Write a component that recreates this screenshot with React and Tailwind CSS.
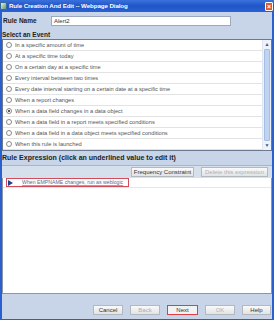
import React from 'react';

const events = [
  'In a specific amount of time',
  'At a specific time today',
  'On a certain day at a specific time',
  'Every interval between two times',
  'Every date interval starting on a certain date at a specific time',
  'When a report changes',
  'When a data field changes in a data object',
  'When a data field in a report meets specified conditions',
  'When a data field in a data object meets specified conditions',
  'When this rule is launched',
];

const Radio = ({ checked }) => (
  <span className="w-[6px] h-[6px] rounded-full border border-[#8a8a8a] bg-white flex items-center justify-center shrink-0">
    {checked && <span className="w-[2px] h-[2px] rounded-full bg-[#222]" />}
  </span>
);

const Btn = ({ children, w, disabled, active }) => (
  <div
    className={`h-[10px] flex items-center justify-center border text-[6px] leading-none ${w} ${
      active ? 'border-[#d9404a] bg-[#f2f2f2]' : 'border-[#b4b8bf] bg-gradient-to-b from-[#fafafa] to-[#e1e3e6]'
    } ${disabled ? 'text-[#b0b0b0]' : 'text-[#333]'}`}
  >
    {children}
  </div>
);

const App = () => {
  return (
    <div className="w-[274px] h-[320px] flex flex-col overflow-hidden bg-[#c8d5e8] font-['Liberation_Sans',Arial,sans-serif]">
      {/* title bar */}
      <div className="h-[12px] shrink-0 flex items-center bg-gradient-to-b from-[#3a72dc] via-[#1f54c6] to-[#2a62d4]">
        <div className="w-[7px] h-[8px] bg-gradient-to-br from-[#e8f0c0] to-[#5a9a8a] border border-[#3a6a9a]" />
        <span className="ml-[2px] text-white font-bold text-[6.2px] leading-none tracking-[-0.1px]">
          Rule Creation And Edit -- Webpage Dialog
        </span>
        <div className="ml-auto w-[8px] h-[9px] mr-[1px] rounded-[1px] bg-[#e0582c] border border-white flex items-center justify-center text-white font-bold text-[7px] leading-none">
          ×
        </div>
      </div>

      <div className="flex-1 flex flex-col border-l-[2px] border-r-[2px] border-b-[1px] border-[#2a5fcf] bg-[#c8d5e8]">
        {/* rule name */}
        <div className="h-[18px] shrink-0 flex items-center">
          <span className="w-[49px] pl-[1px] text-[6.5px] font-bold text-[#222]">Rule Name</span>
          <div className="w-[180px] h-[10px] bg-white border border-[#9aa9bd] flex items-center px-[2px] text-[6px] text-[#333]">
            Alert2
          </div>
        </div>

        <div className="h-[9px] shrink-0 flex items-end text-[6.5px] font-bold text-[#222] leading-none pb-[1px]">
          Select an Event
        </div>

        {/* event list */}
        <div className="h-[112px] shrink-0 flex bg-white border border-[#6b7a8f]">
          <div className="flex-1 flex flex-col">
            {events.map((e, i) => (
              <div
                key={i}
                className="h-[11px] shrink-0 flex items-center gap-[3px] pl-[3px] border-b border-[#e3e3e3] text-[5.7px] text-[#555] whitespace-nowrap"
              >
                <Radio checked={i === 6} />
                {e}
              </div>
            ))}
          </div>
          <div className="w-[9px] flex flex-col bg-[#eef3fb] border-l border-[#dfe6f1]">
            <div className="h-[9px] flex items-center justify-center text-[5px] text-[#3a5a8a]">▲</div>
            <div className="flex-1 mx-[1px] bg-[#c0d4f2] border border-[#a6bde3] rounded-[1px]" />
            <div className="h-[9px] flex items-center justify-center text-[5px] text-[#3a5a8a]">▼</div>
          </div>
        </div>

        {/* rule expression header */}
        <div className="h-[15px] shrink-0 flex items-center text-[7px] font-bold text-[#222] border-b border-[#a9b6c9]">
          Rule Expression (click an underlined value to edit it)
        </div>

        <div className="h-[12px] shrink-0 flex items-center justify-end gap-[7px] pr-[4px] bg-[#d6dfec]">
          <Btn w="w-[63px]">Frequency Constraint</Btn>
          <Btn w="w-[67px]" disabled>Delete this expression</Btn>
        </div>

        {/* expression area */}
        <div className="h-[116px] shrink-0 bg-white border-l border-r border-b border-[#8c96a4] flex flex-col">
          <div className="h-[10px] flex items-center border-b border-[#ece9d8]">
            <div className="ml-[3px] w-[123px] h-[9px] border border-[#d24b5a] flex items-center">
              <svg width="5" height="6" viewBox="0 0 5 6" className="ml-[1px]">
                <polygon points="0,0 5,3 0,6" fill="#1f3f8f" />
              </svg>
              <span className="ml-[9px] text-[5.2px] text-[#5a6a8a] underline decoration-[#9aa6c0] whitespace-nowrap leading-none">
                When EMPNAME changes, run as weblogic
              </span>
            </div>
          </div>
        </div>

        {/* bottom buttons */}
        <div className="flex-1 flex items-center justify-end gap-[7px] pr-[1px] pt-[6px]">
          <Btn w="w-[30px]">Cancel</Btn>
          <Btn w="w-[30px]" disabled>Back</Btn>
          <Btn w="w-[31px]" active>Next</Btn>
          <Btn w="w-[30px]" disabled>OK</Btn>
          <Btn w="w-[29px]">Help</Btn>
        </div>
      </div>
    </div>
  );
};

export default App;
